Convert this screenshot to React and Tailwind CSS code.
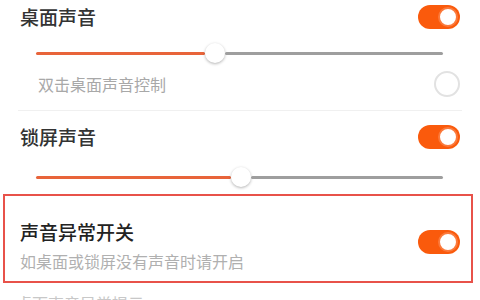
import React from 'react';

const Toggle = () => (
    <div className="flex h-[24px] w-[42px] items-center justify-end rounded-full bg-[#fa5a0c] p-[2px]">
        <div className="h-[20px] w-[20px] rounded-full border-2 border-[#fb7a3c] bg-white" />
    </div>
);

const Slider = ({ fill }) => (
    <div className="ml-9 flex w-[407px] items-center">
        <div className="h-[3px] rounded-full bg-[#e8643a]" style={{ width: fill }} />
        <div className="h-5 w-5 shrink-0 rounded-full bg-white shadow-[0_1px_3px_rgba(0,0,0,0.3)]" />
        <div className="h-[3px] flex-1 rounded-full bg-[#9e9e9e]" />
    </div>
);

export default function App() {
    return (
        <div className="h-[300px] w-[480px] overflow-hidden bg-white font-['Noto_Sans_CJK_SC',sans-serif]">
            {/* 桌面声音 */}
            <div className="flex h-[34px] items-center justify-between px-5">
                <span className="text-[19px] font-medium leading-[26px] text-[#333]">桌面声音</span>
                <Toggle />
            </div>
            <div className="flex h-[38px] items-center">
                <Slider fill={169} />
            </div>
            <div className="flex h-[24px] items-center justify-between pl-[38px] pr-5">
                <span className="text-[16px] leading-[20px] text-[#a8a8a8]">双击桌面声音控制</span>
                <div className="h-[26px] w-[26px] rounded-full border-2 border-[#e2e2e2]" />
            </div>
            <div className="ml-[18px] mr-[18px] mt-[14px] h-px bg-[#f0f0f0]" />

            {/* 锁屏声音 */}
            <div className="flex h-[52px] items-center justify-between px-5">
                <span className="text-[19px] font-medium leading-[26px] text-[#333]">锁屏声音</span>
                <Toggle />
            </div>
            <div className="flex h-[28px] items-center">
                <Slider fill={195} />
            </div>

            {/* 声音异常开关 */}
            <div className="mx-[3px] mt-[3px] flex h-[89px] w-[470px] justify-between border-2 border-[#e8524a] pl-[15px] pr-[11px]">
                <div className="flex flex-col justify-center pt-[12px]">
                    <span className="text-[19px] font-medium leading-[26px] text-[#222]">声音异常开关</span>
                    <span className="mt-[6px] text-[16px] leading-[20px] text-[#b0b0b0]">如桌面或锁屏没有声音时请开启</span>
                </div>
                <div className="flex items-center pt-[7px]">
                    <Toggle />
                </div>
            </div>

            <div className="mt-[10px] px-4 text-[16px] leading-[20px] text-[#c8c8c8]">桌面声音异常提示</div>
        </div>
    );
}
